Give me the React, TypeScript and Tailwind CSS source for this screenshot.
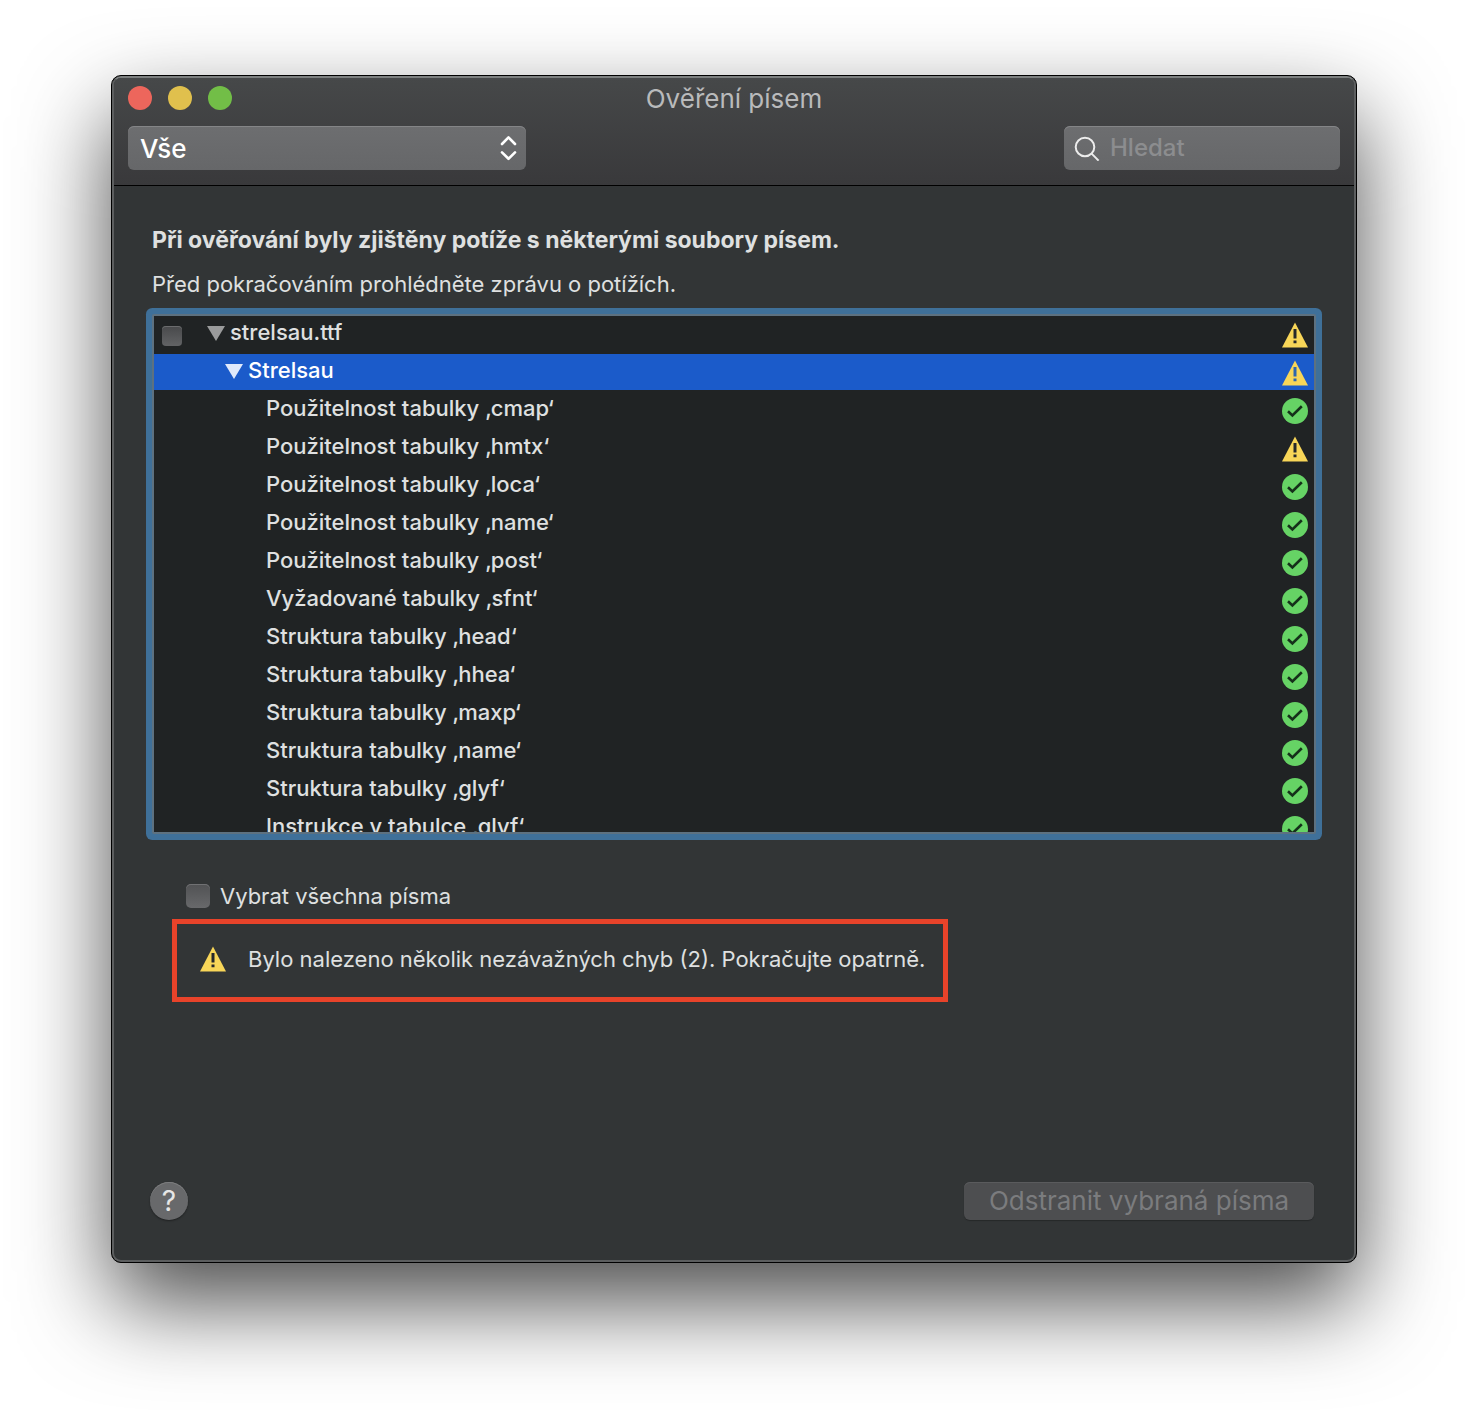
type Status = "ok" | "warning";

const rows: { name: string; status: Status }[] = [
  { name: "Použitelnost tabulky ‚cmap‘", status: "ok" },
  { name: "Použitelnost tabulky ‚hmtx‘", status: "warning" },
  { name: "Použitelnost tabulky ‚loca‘", status: "ok" },
  { name: "Použitelnost tabulky ‚name‘", status: "ok" },
  { name: "Použitelnost tabulky ‚post‘", status: "ok" },
  { name: "Vyžadované tabulky ‚sfnt‘", status: "ok" },
  { name: "Struktura tabulky ‚head‘", status: "ok" },
  { name: "Struktura tabulky ‚hhea‘", status: "ok" },
  { name: "Struktura tabulky ‚maxp‘", status: "ok" },
  { name: "Struktura tabulky ‚name‘", status: "ok" },
  { name: "Struktura tabulky ‚glyf‘", status: "ok" },
  { name: "Instrukce v tabulce ‚glyf‘", status: "ok" },
];

function WarningIcon({ mark = "#26282a" }: { mark?: string }) {
  return (
    <svg viewBox="0 0 26 26" className="size-[26px] shrink-0" aria-hidden="true">
      <path d="M13 .5 26 25.6H0Z" fill="#f8d658" />
      <path d="M11.5 7h3v9.6h-3zM11.5 18.4h3v2.8h-3z" fill={mark} />
    </svg>
  );
}

function OkIcon() {
  return (
    <svg viewBox="0 0 26 26" className="size-[26px] shrink-0" aria-hidden="true">
      <circle cx="13" cy="13" r="13" fill="#66d365" />
      <path
        d="M6 13.2 10.4 17.4 19.8 8.2"
        fill="none"
        stroke="#15301a"
        strokeWidth="2.6"
      />
    </svg>
  );
}

function Disclosure({ label, color }: { label: string; color: string }) {
  return (
    <button type="button" aria-label={label} aria-expanded="true" className="pt-[2px]">
      <svg viewBox="0 0 18 15" className="h-[15px] w-[18px]" fill={color}>
        <path d="M0 0h18L9 15Z" />
      </svg>
    </button>
  );
}

function StatusCell({ children }: { children: React.ReactNode }) {
  return (
    <td className="h-[38px] w-10 border-b-2 border-transparent bg-clip-padding p-0">
      <div className="flex justify-end pt-[2px] pr-[6px]">{children}</div>
    </td>
  );
}

function FontTable() {
  return (
    <div className="mt-4 h-[520px] overflow-hidden rounded-[2px] border-2 border-[#5d7180] bg-[#202324] ring-6 ring-[#3f7099]">
      <table className="w-full border-separate border-spacing-0 text-[22px] leading-7 font-[450] text-[#dfe0e0]">
        <tbody>
          <tr>
            <td className="h-[38px] w-[53px] border-b-2 border-transparent p-0">
              <input
                type="checkbox"
                aria-label="strelsau.ttf"
                className="mt-1 ml-2 block size-5 appearance-none rounded-[4px] bg-linear-to-b from-[#48494b] to-[#626365] shadow-[inset_0_1px_0_#6b6c6e]"
              />
            </td>
            <td className="h-[38px] border-b-2 border-transparent p-0">
              <div className="flex items-center gap-[5px] pb-1">
                <Disclosure label="Sbalit strelsau.ttf" color="#9a9b9c" />
                strelsau.ttf
              </div>
            </td>
            <StatusCell>
              <WarningIcon />
            </StatusCell>
          </tr>
          <tr className="text-white *:bg-[#1b5bca]">
            <td className="h-[38px] border-b-2 border-transparent bg-clip-padding p-0" />
            <td className="h-[38px] border-b-2 border-transparent bg-clip-padding p-0">
              <div className="flex items-center gap-[5px] pb-1 pl-[18px]">
                <Disclosure label="Sbalit Strelsau" color="#dfe9fb" />
                Strelsau
              </div>
            </td>
            <StatusCell>
              <WarningIcon mark="#2f66ad" />
            </StatusCell>
          </tr>
          {rows.map(({ name, status }) => (
            <tr key={name}>
              <td className="h-[38px] border-b-2 border-transparent p-0" />
              <td className="h-[38px] border-b-2 border-transparent p-0">
                <div className="pb-1 pl-[59px]">{name}</div>
              </td>
              <StatusCell>
                {status === "ok" ? <OkIcon /> : <WarningIcon />}
              </StatusCell>
            </tr>
          ))}
        </tbody>
      </table>
    </div>
  );
}

function Toolbar() {
  return (
    <header className="border-b border-black bg-linear-to-b from-[#464849] to-[#39393b] px-[14px] pt-2 pb-[15px]">
      <div className="grid grid-cols-[1fr_auto_1fr] items-center">
        <div className="flex gap-4">
          <button type="button" aria-label="Zavřít" className="size-6 rounded-full bg-[#ed665c]" />
          <button type="button" aria-label="Minimalizovat" className="size-6 rounded-full bg-[#e0c04d]" />
          <button type="button" aria-label="Zvětšit" className="size-6 rounded-full bg-[#72be47]" />
        </div>
        <h1 className="pt-[2px] text-[26px] leading-[22px] font-normal text-[#b9babb]">
          Ověření písem
        </h1>
      </div>

      <div className="mt-4 flex items-center justify-between">
        <div className="relative w-[398px]">
          <select
            aria-label="Zobrazit"
            className="block h-11 w-full appearance-none rounded-[6px] bg-linear-to-b from-[#6d6e70] to-[#666769] px-3 pt-[2px] text-[26px] leading-8 font-[450] text-white shadow-[inset_0_1px_0_#848587]"
          >
            <option>Vše</option>
          </select>
          <svg
            viewBox="0 0 18 26"
            className="pointer-events-none absolute top-[9px] right-2 h-[26px] w-[18px]"
            fill="none"
            stroke="#fff"
            strokeWidth="2.6"
            strokeLinecap="round"
            strokeLinejoin="round"
            aria-hidden="true"
          >
            <path d="M2 9 8.5 2.4 15 9M2 17.4l6.5 6.4 6.5-6.4" />
          </svg>
        </div>

        <div className="flex h-11 w-[276px] items-center gap-[10px] rounded-[6px] bg-linear-to-b from-[#6d6e70] to-[#666769] px-[10px] shadow-[inset_0_1px_0_#848587]">
          <svg
            viewBox="0 0 26 26"
            className="size-[26px] shrink-0"
            fill="none"
            stroke="#ececec"
            strokeWidth="2"
            aria-hidden="true"
          >
            <circle cx="11" cy="12" r="9.3" />
            <path d="m17.6 18.6 7 7" />
          </svg>
          <input
            type="search"
            aria-label="Hledat"
            placeholder="Hledat"
            className="w-full min-w-0 bg-transparent text-[24px] leading-8 font-[450] text-white outline-none placeholder:text-[#8c8d8f]"
          />
        </div>
      </div>
    </header>
  );
}

export default function App() {
  return (
    <div className="bg-white px-[111px] pt-[75px] pb-[147px] font-['Inter',sans-serif]">
      <div className="rounded-[10px] border border-black bg-black shadow-[0_40px_90px_rgba(0,0,0,0.7)]">
        <div className="overflow-hidden rounded-[9px] border-2 border-[#5c5e5f] border-t-[#7d8080] bg-[#323536]">
          <Toolbar />

          <main className="px-[38px] pt-10 text-[22px] leading-7 text-[#dfe0e0]">
            <h2 className="text-[23px] leading-7 font-[650]">
              Při ověřování byly zjištěny potíže s některými soubory písem.
            </h2>
            <p className="mt-4">
              Před pokračováním prohlédněte zprávu o potížích.
            </p>
            <FontTable />

            <label className="mt-12 ml-[34px] flex w-fit items-center gap-[10px]">
              <input
                type="checkbox"
                className="size-6 appearance-none rounded-[5px] bg-linear-to-b from-[#515254] to-[#68696b] shadow-[inset_0_1px_0_#707173]"
              />
              Vybrat všechna písma
            </label>

            <div className="mt-[9px] ml-5 flex h-[83px] w-fit items-center gap-[22px] border-5 border-[#e8432a] pr-[18px] pb-1 pl-[23px]">
              <WarningIcon />
              <p>
                Bylo nalezeno několik nezávažných chyb (2). Pokračujte opatrně.
              </p>
            </div>
          </main>

          <footer className="mt-[180px] flex items-center justify-between pr-10 pb-10 pl-9">
            <button
              type="button"
              aria-label="Nápověda"
              className="size-[38px] rounded-full bg-[#68696b] text-[28px] leading-[38px] text-[#e6e6e6] shadow-[inset_0_1px_0_#7c7d7f,0_1px_2px_rgba(0,0,0,0.4)]"
            >
              ?
            </button>
            <button
              type="button"
              disabled
              className="h-[38px] w-[350px] rounded-[6px] bg-[#4d4e50] text-[26px] leading-8 text-[#7b7c7e] shadow-[inset_0_1px_0_#5a5b5d,0_1px_1px_rgba(0,0,0,0.25)]"
            >
              Odstranit vybraná písma
            </button>
          </footer>
        </div>
      </div>
    </div>
  );
}
